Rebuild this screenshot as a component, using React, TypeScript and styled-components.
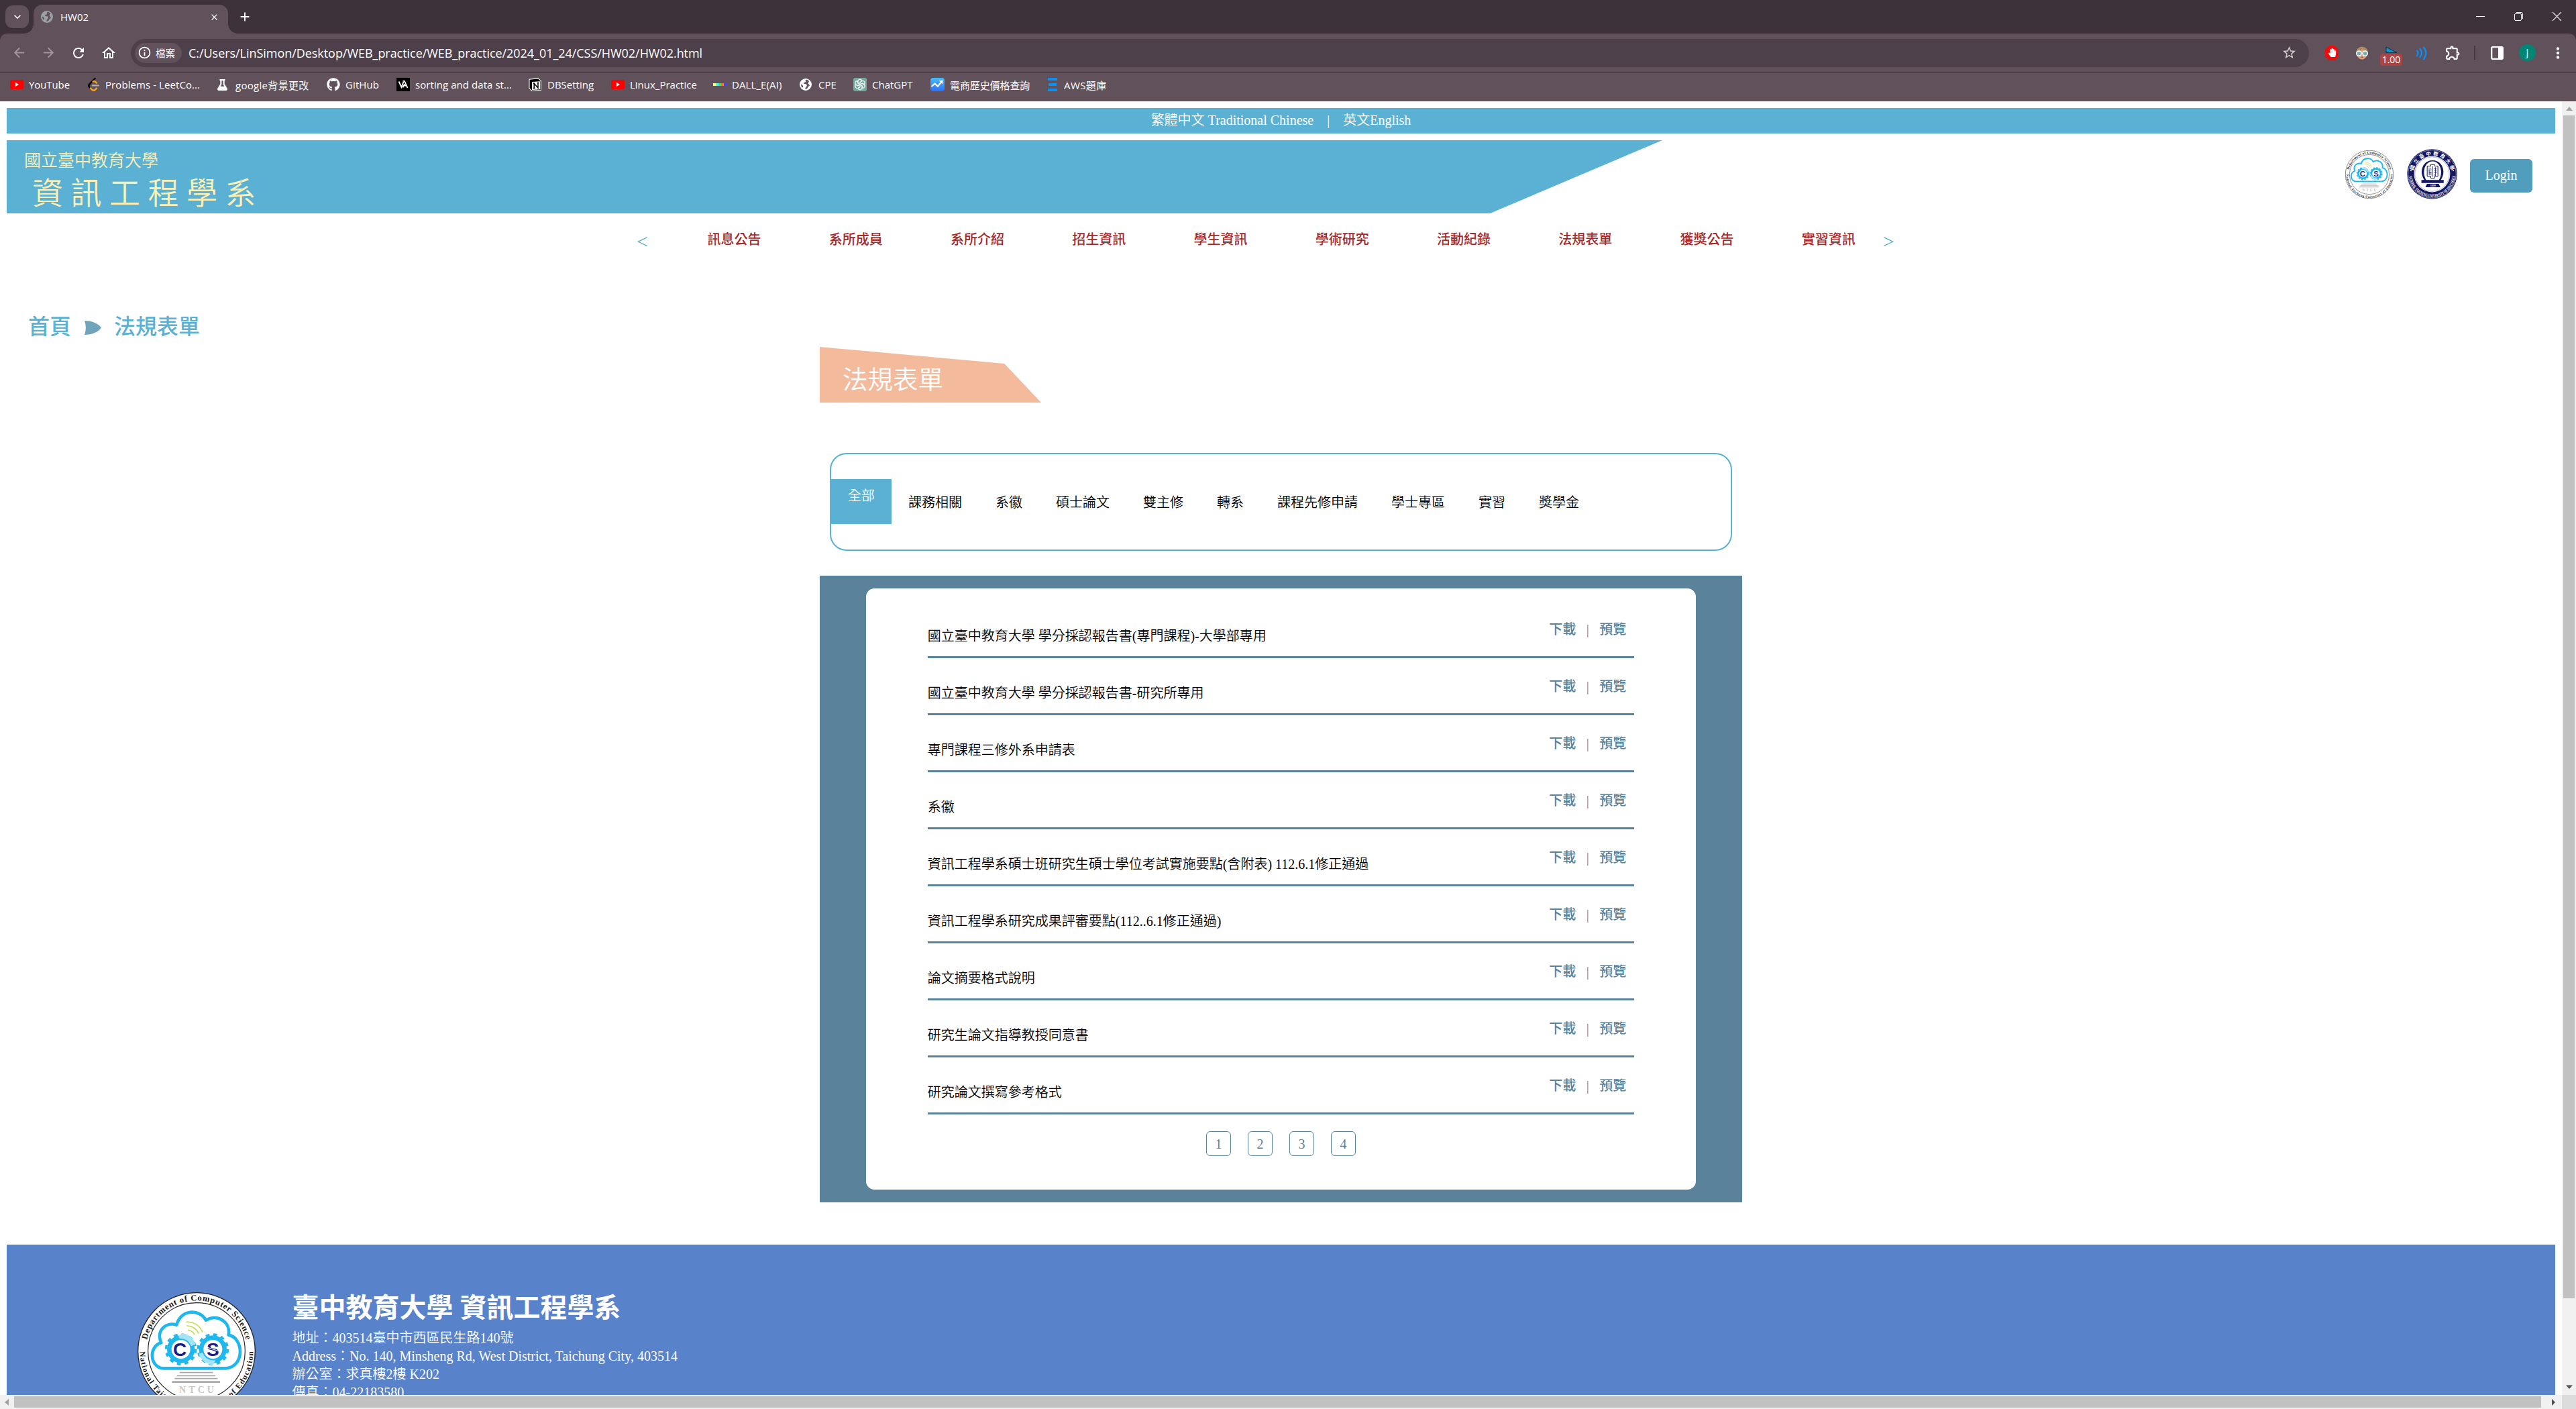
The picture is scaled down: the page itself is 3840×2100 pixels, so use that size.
import React from "react";
import styled, { createGlobalStyle } from "styled-components";
import {
  MdArrowBack,
  MdArrowForward,
  MdRefresh,
  MdOutlineHome,
  MdInfoOutline,
  MdStarBorder,
  MdOutlineExtension,
  MdMoreVert,
  MdClose,
  MdAdd,
  MdExpandMore,
} from "react-icons/md";
import { FaGithub, FaFlask, FaHandPaper } from "react-icons/fa";

const SERIF = `"Liberation Serif", "Noto Sans CJK TC", serif`;
const UI = `"Open Sans", "Noto Sans CJK TC", sans-serif`;
const SKY = "#5ab1d4";
const STEEL = "#5a829a";

const GlobalStyle = createGlobalStyle`
  *, *::before, *::after { box-sizing: border-box; }
  body { margin: 0; background: #fff; overflow: hidden; }
  svg { display: block; flex: none; }
`;

/* ---------- browser frame ---------- */

const Browser = styled.div`
  width: 3840px;
  height: 2100px;
  display: flex;
  flex-direction: column;
  overflow: hidden;
  background: #3d3239;
  font-family: ${UI};
`;

const TabStrip = styled.div`
  height: 50px;
  flex: none;
  display: flex;
  align-items: flex-start;
  padding-left: 8px;
  color: #fff;
`;

const TabSearch = styled.div`
  width: 35px;
  height: 34px;
  margin-top: 8px;
  border-radius: 11px;
  background: #60515b;
  display: flex;
  align-items: center;
  justify-content: center;
`;

const Tab = styled.div`
  position: relative;
  width: 290px;
  height: 43px;
  margin: 7px 0 0 7px;
  padding: 0 13px 7px 11px;
  display: flex;
  align-items: center;
  border-radius: 13px 13px 0 0;
  background: #60515b;
  font-size: 15px;
  &::before, &::after {
    content: "";
    position: absolute;
    bottom: 0;
    width: 14px;
    height: 14px;
  }
  &::before { left: -14px; background: radial-gradient(circle at 0 0, transparent 13.5px, #60515b 14px); }
  &::after { right: -14px; background: radial-gradient(circle at 100% 0, transparent 13.5px, #60515b 14px); }
`;

const TabTitle = styled.span`
  flex: 1;
  padding-left: 11px;
`;

const NewTab = styled.div`
  margin: 14px 0 0 14px;
`;

const WindowButtons = styled.div`
  margin-left: auto;
  display: flex;
  gap: 42px;
  padding: 17px 21px 0 0;
`;

const Toolbar = styled.div`
  height: 57px;
  flex: none;
  display: flex;
  align-items: center;
  background: #60515b;
  border-radius: 10px 10px 0 0;
  color: #fff;
`;

const NavButtons = styled.div`
  width: 195px;
  display: flex;
  gap: 21px;
  padding-left: 17px;
`;

const Omnibox = styled.div`
  width: 3247px;
  height: 42px;
  border-radius: 21px;
  background: #4d404a;
  display: flex;
  align-items: center;
  padding: 0 18px 0 6px;
`;

const Chip = styled.div`
  width: 70px;
  height: 30px;
  border-radius: 15px;
  background: #60515b;
  display: flex;
  align-items: center;
  gap: 6px;
  padding-left: 4px;
  font-size: 14.5px;
`;

const Url = styled.span`
  flex: 1;
  padding-left: 10px;
  font-size: 18px;
  letter-spacing: -0.045px;
  white-space: nowrap;
`;

const Extensions = styled.div`
  flex: 1;
  display: flex;
  align-items: center;
  padding-left: 24px;
`;

const Slot = styled.div<{ $w: number }>`
  position: relative;
  width: ${(p) => p.$w}px;
  height: 24px;
  flex: none;
  display: flex;
  align-items: center;
`;

const Badge = styled.span`
  position: absolute;
  left: -8px;
  top: 13px;
  width: 33px;
  height: 18px;
  border-radius: 4px;
  background: #a94545;
  font-size: 14px;
  line-height: 18px;
  text-align: center;
`;

const Divider = styled.i`
  width: 1.5px;
  height: 21px;
  background: #45373f;
`;

const Avatar = styled.div`
  width: 25px;
  height: 25px;
  border-radius: 50%;
  background: #008675;
  font-size: 15px;
  line-height: 22px;
  text-align: center;
`;

const Bookmarks = styled.div`
  height: 44px;
  flex: none;
  display: flex;
  padding-left: 15px;
  background: #60515b;
  border-top: 1px solid #34272f;
  color: #fff;
`;

const Bookmark = styled.div<{ $w: number; $ls: number }>`
  width: ${(p) => p.$w}px;
  height: 36px;
  flex: none;
  display: flex;
  align-items: center;
  gap: 8px;
  font-size: 15px;
  letter-spacing: ${(p) => p.$ls}px;
  white-space: nowrap;
`;

const Viewport = styled.div`
  height: 1949px;
  display: grid;
  grid-template-columns: 3819px 21px;
  grid-template-rows: 1928px 21px;
  background: #fff;
`;

const Bar = styled.div<{ $vertical?: boolean }>`
  display: flex;
  flex-direction: ${(p) => (p.$vertical ? "column" : "row")};
  align-items: center;
  justify-content: space-between;
  background: #f0f0f0;
`;

const Thumb = styled.div<{ $vertical?: boolean }>`
  width: ${(p) => (p.$vertical ? "17px" : "3767px")};
  height: ${(p) => (p.$vertical ? "1763px" : "17px")};
  background: #c1c1c1;
`;

const ArrowCell = styled.div<{ $w: number; $h: number }>`
  width: ${(p) => p.$w}px;
  height: ${(p) => p.$h}px;
  display: flex;
  align-items: center;
  justify-content: center;
`;

const Corner = styled.div`
  background: #dcdcdc;
`;

/* ---------- web page ---------- */

const Page = styled.div`
  padding: 10px 10px 0;
  overflow: hidden;
  background: #fff;
  font-family: ${SERIF};
  font-size: 20px;
  font-weight: 350;
  line-height: 30px;
  color: #000;
`;

const LanguageBar = styled.div`
  height: 38px;
  display: flex;
  justify-content: center;
  gap: 20px;
  line-height: 36px;
  background: ${SKY};
  color: #fff;
`;

const Header = styled.header`
  height: 109px;
  margin-top: 10px;
  display: flex;
  align-items: flex-start;
`;

const Banner = styled.div`
  width: 2468px;
  height: 109px;
  padding: 14px 0 0 26px;
  background: ${SKY};
  clip-path: polygon(0 0, 100% 0, 89.6% 100%, 0 100%);
  color: #fcefb4;
`;

const School = styled.div`
  font-size: 25px;
  line-height: 34px;
`;

const Department = styled.div`
  padding-left: 12px;
  font-size: 46px;
  line-height: 64px;
  letter-spacing: 11.5px;
`;

const HeaderTools = styled.div`
  margin-left: auto;
  padding-right: 34px;
  display: flex;
  align-items: flex-start;
`;

const LogoBox = styled.div<{ $top: number; $right: number }>`
  margin: ${(p) => p.$top}px ${(p) => p.$right}px 0 0;
`;

const Login = styled.button`
  width: 93px;
  height: 50px;
  margin-top: 28px;
  padding: 0 0 2px;
  border: 0;
  border-radius: 6px;
  background: #509dbd;
  color: #fff;
  font: 20px ${SERIF};
`;

const Menu = styled.nav`
  height: 78px;
  padding: 0 0 0 939px;
  display: flex;
  align-items: center;
  color: #a52a2a;
  font-weight: 500;
`;

const MenuItems = styled.div`
  display: flex;
  gap: 101.25px;
  margin: 0 41px 0 89.5px;
  white-space: nowrap;
`;

const MenuArrow = styled.span`
  width: 16px;
  padding-top: 5px;
  font-size: 30px;
  font-weight: 400;
  color: ${SKY};
`;

const Breadcrumb = styled.div`
  height: 121px;
  padding: 71px 0 0 32px;
  display: flex;
  gap: 19.5px;
  font-size: 32px;
  line-height: 40px;
  font-weight: 500;
  color: ${SKY};
  svg { margin-top: 11px; }
`;

const Main = styled.main`
  width: 1375px;
  margin: 0 auto;
`;

const Title = styled.h1`
  width: 330px;
  height: 83px;
  margin: 0;
  padding-left: 34px;
  background: #f3bb9c;
  clip-path: polygon(0 0, 83.4% 30%, 100% 100%, 0 100%);
  color: #fff;
  font-size: 37.5px;
  font-weight: 350;
  line-height: 100px;
`;

const Filters = styled.div`
  width: 1345px;
  height: 146px;
  margin: 75px 15px 0;
  padding-top: 37px;
  display: flex;
  border: 2px solid ${SKY};
  border-radius: 25px;
`;

const Filter = styled.span<{ $active?: boolean }>`
  height: 67px;
  padding: 0 25px;
  line-height: ${(p) => (p.$active ? 50 : 70)}px;
  background: ${(p) => (p.$active ? SKY : "transparent")};
  color: ${(p) => (p.$active ? "#fff" : "#000")};
`;

const Card = styled.section`
  height: 934px;
  margin-top: 37px;
  padding: 19px 68.75px;
  background: ${STEEL};
`;

const Sheet = styled.div`
  height: 896px;
  padding: 19px 92px 0;
  border-radius: 12.5px;
  background: #fff;
`;

const Row = styled.div`
  height: 85px;
  display: flex;
  justify-content: space-between;
  border-bottom: 3px solid ${STEEL};
`;

const RowName = styled.span`
  padding-top: 37px;
`;

const RowLinks = styled.span`
  display: flex;
  gap: 15.5px;
  padding: 27px 12px 0 0;
  color: ${STEEL};
  b { font-weight: 500; }
`;

const Pages = styled.div`
  margin-top: 25px;
  display: flex;
  justify-content: center;
  gap: 25px;
`;

const PageNumber = styled.span`
  width: 37px;
  height: 37px;
  border: 1.25px solid ${STEEL};
  border-radius: 6px;
  line-height: 36px;
  text-align: center;
  color: ${STEEL};
`;

const Footer = styled.footer`
  height: 300px;
  margin-top: 63px;
  padding: 71px 0 0 195px;
  display: flex;
  gap: 54.5px;
  background: #5882ca;
  color: #fff;
`;

const Address = styled.div`
  line-height: 27px;
  white-space: nowrap;
`;

const FooterTitle = styled.h2`
  margin: 0 0 7px;
  font-size: 40px;
  line-height: 48px;
  font-weight: 700;
`;

/* ---------- drawings ---------- */

const Gear = ({ x, y }: { x: number; y: number }) => (
  <g transform={`translate(${x} ${y})`} fill="none">
    <circle r="52" stroke="#1fb8ee" strokeWidth="20" />
    <circle r="66" stroke="#1fb8ee" strokeWidth="11" strokeDasharray="17.3 17.25" />
  </g>
);

const DeptLogo = ({ size, id }: { size: number; id: string }) => (
  <svg width={size} height={size} viewBox="74 77 528 528">
    <defs>
      <path id={`${id}-top`} d="M111 341 A227 227 0 0 1 565 341" />
      <path id={`${id}-low`} d="M86 322 A253 253 0 1 0 590 322" />
    </defs>
    <circle cx="338" cy="341" r="262" fill="#fff" stroke="#222" strokeWidth="4" />
    <circle cx="338" cy="341" r="217" fill="none" stroke="#222" strokeWidth="3.5" />
    <g fontFamily="Liberation Serif, serif" fontWeight="700" fill="#1a1a1a">
      <text fontSize="38" textAnchor="middle">
        <textPath href={`#${id}-top`} startOffset="50%" textLength="610">Department of Computer Science</textPath>
      </text>
      <text fontSize="35" textAnchor="middle">
        <textPath href={`#${id}-low`} startOffset="50%" textLength="800">National Taichung University of Education</textPath>
      </text>
      <text x="260" y="527" fontSize="42" textLength="156" fill="#c8c8c8">NTCU</text>
    </g>
    <path
      d="M190 417C128 414 122 318 180 303C155 250 200 208 249 223C266 152 352 150 380 202C432 172 492 210 481 268C548 280 556 408 470 417Z"
      fill="#fff" stroke="#1fb8ee" strokeWidth="14" strokeLinejoin="round"
    />
    <Gear x={268} y={332} />
    <Gear x={411} y={332} />
    <path d="M257 276 L272 261 A70 70 0 0 1 334 310 L313 318 A48 48 0 0 0 262 284Z" fill="#a5e3f8" />
    <path d="M420 386 L412 402 A70 70 0 0 1 348 352 L366 346 A48 48 0 0 0 424 380Z" fill="#a5e3f8" />
    <g fontFamily="Liberation Sans, sans-serif" fontWeight="700" fontSize="84" fill="#1c1c86" textAnchor="middle">
      <text x="263" y="362">C</text>
      <text x="411" y="362">S</text>
    </g>
    <path d="M382 322 L442 342" stroke="#fff" strokeWidth="3" />
    <g fill="none" stroke="#c6da5a" strokeWidth="5">
      <path d="M291 210 A72 72 0 0 1 365 256" />
      <path d="M294 227 A54 54 0 0 1 347 262" />
      <path d="M299 246 A36 36 0 0 1 329 267" />
    </g>
    <g stroke="#aaa" strokeWidth="5">
      <path d="M262 436H412" /><path d="M250 450H422" /><path d="M240 463H432" />
      <path d="M228 478H443" strokeWidth="8" />
    </g>
  </svg>
);

const UniversityLogo = () => (
  <svg width="75" height="75" viewBox="323 66 226 226">
    <defs>
      <path id="uni-top" d="M351 179 A85 85 0 0 1 521 179" />
      <path id="uni-low" d="M331 179 A105 105 0 0 0 541 179" />
    </defs>
    <circle cx="436" cy="179" r="112" fill="#14175f" />
    <circle cx="436" cy="179" r="108" fill="none" stroke="#fff" strokeWidth="1.5" />
    <circle cx="436" cy="179" r="81" fill="#fff" />
    <circle cx="436" cy="179" r="77.5" fill="none" stroke="#14175f" strokeWidth="1" />
    <g fill="#fff" fontWeight="700" textAnchor="middle">
      <text fontSize="22" fontFamily="Noto Sans CJK TC, sans-serif">
        <textPath href="#uni-top" startOffset="50%" textLength="234">國立臺中教育大學</textPath>
      </text>
      <text fontSize="21" fontFamily="Liberation Serif, serif">
        <textPath href="#uni-low" startOffset="50%" textLength="312" lengthAdjust="spacingAndGlyphs">NATIONAL TAICHUNG UNIVERSITY OF EDUCATION</textPath>
      </text>
    </g>
    <circle cx="341" cy="163" r="3" fill="#fff" />
    <circle cx="531" cy="163" r="3" fill="#fff" />
    <path d="M388 205H401C376 170 392 117 438 117C484 117 500 170 475 205H488V219H388Z" fill="#14175f" />
    <path d="M409 205C388 170 404 122 438 122C472 122 488 170 467 205Z" fill="#fff" />
    <path d="M413 223H466L473 238H406Z" fill="#14175f" />
    <text x="440" y="235" fontSize="12" fontWeight="700" textAnchor="middle" fill="#fff" fontFamily="Liberation Serif, serif">1899</text>
    <g fill="none" stroke="#14175f" strokeWidth="3">
      <path d="M430 136H447V143H462V189H447V197H430V189H414V143H430Z" />
      <path d="M438 143V191M420 152H432M420 160H433M421 170H432M423 160V184M431 168V184M444 153H457M445 161H457M444 170H458M451 148V187M445 180L451 187" strokeWidth="2.6" />
    </g>
  </svg>
);

const Globe = ({ size, color, land }: { size: number; color: string; land: string }) => (
  <svg width={size} height={size} viewBox="0 0 18 18">
    <circle cx="9" cy="9" r="9" fill={color} />
    <path d="M10.5 1.8C8.3 2.4 8 4 9.4 5C7.5 5.6 6 6.2 5.8 7.6C7.8 8.6 10.8 7.8 10.8 10.4C10.6 12.3 8.2 12.6 8.4 15.8C10.4 16 12 14.6 12.4 12.8C12.8 11.6 14.4 11.6 14.9 10.2C14.8 8.8 13 8.6 12.6 7.4C13.6 6.4 13 5.2 14 4C13 2.8 12 2 10.5 1.8ZM2 8.6C3.5 9.2 5.4 10.6 5.3 12.6C5 13.6 4 13.6 3.4 12.8C2.4 11.6 2 10 2 8.6Z" fill={land} />
  </svg>
);

const YouTube = () => (
  <svg width="20" height="20" viewBox="0 0 20 20">
    <rect y="3" width="20" height="14" rx="3" fill="#f00" />
    <path d="M7.8 6.8V13.2L13 10Z" fill="#fff" />
  </svg>
);

const LeetCode = () => (
  <svg width="20" height="20" viewBox="0 0 20 20" fill="none" strokeWidth="2.4" strokeLinecap="round">
    <path d="M12.5 1.2L4.2 9.6C3 11 3.2 12.6 4.2 13.8L6 15.6" stroke="#000" />
    <path d="M6 15.4L8 17.6C9.6 19 11.6 19 13 17.6L15 15.6M9.6 5.6C11 4.8 12.4 5 13.4 6.2L15 7.6" stroke="#ffa116" />
    <path d="M9 11.4H17.5" stroke="#b3b3b3" />
  </svg>
);

const VisuAlgo = () => (
  <svg width="20" height="20" viewBox="0 0 20 20">
    <rect width="20" height="20" fill="#000" />
    <path d="M3.5 5.5L7.5 14L10.5 6M9.5 4.8H12L16.5 15M9.5 14.5L12 9M10.5 11.5H15.5" fill="none" stroke="#fff" strokeWidth="1.8" />
  </svg>
);

const Notion = () => (
  <svg width="20" height="20" viewBox="0 0 20 20">
    <path d="M1 2.2L13.8 .9L18.4 4.2V18.2L4.6 19.2L1 15.4Z" fill="#000" stroke="#fff" strokeWidth="1.1" />
    <path d="M5 6L17.3 5.2V17.3L5 18Z" fill="#fff" />
    <path d="M8.2 15.4V8.4L14 15V7.6M6.8 8.3H9.4M12.6 7.6H15.4M6.8 15.5H9.6" stroke="#000" strokeWidth="1.5" fill="none" />
  </svg>
);

const Dalle = () => (
  <svg width="20" height="20" viewBox="0 0 20 20">
    {["#ffff66", "#42ffff", "#51da4c", "#ff6e3c", "#3c46ff"].map((c, i) => (
      <rect key={c} x={i * 4} y="8" width="4" height="4" fill={c} />
    ))}
  </svg>
);

const ChatGpt = () => (
  <svg width="20" height="20" viewBox="0 0 20 20">
    <rect width="20" height="20" rx="3" fill="#75a99b" />
    <g fill="none" stroke="#fff" strokeWidth="1.1" transform="translate(10 10)">
      {[0, 60, 120, 180, 240, 300].map((a) => (
        <path key={a} transform={`rotate(${a})`} d="M-3 -1.8V-4.6A3 3 0 0 1 2.8 -5.8L0 -3.6V-.5" />
      ))}
    </g>
  </svg>
);

const PriceChart = () => (
  <svg width="21" height="20" viewBox="0 0 21 20">
    <defs>
      <linearGradient id="price" x1="0" y1="0" x2="0" y2="1">
        <stop offset="0" stopColor="#45bdf8" />
        <stop offset="1" stopColor="#2f71fb" />
      </linearGradient>
    </defs>
    <rect width="21" height="20" rx="4" fill="url(#price)" />
    <path d="M1.5 13L6.5 8.6L11 12.6L17 5.4" fill="none" stroke="#fff" strokeWidth="2.2" />
    <path d="M12.8 4.6L18.6 3.4L18 9.2Z" fill="#fff" />
  </svg>
);

const Stack = () => (
  <svg width="20" height="20" viewBox="0 0 20 20" fill="#0d8ff2">
    <path d="M4 0H18V4H4ZM5 8H17V12H5ZM4 16H18V20H4Z" />
  </svg>
);

const Face = () => (
  <svg width="20" height="20" viewBox="0 0 20 20">
    <circle cx="10" cy="9.6" r="9" fill="#a98a5f" />
    <path d="M2.4 9C6 8 9 6 11 3.8C13 6 15 7 17.6 8.4C18 13.6 15 19.6 10 19.6C5 19.6 2.2 14 2.4 9Z" fill="#dba283" />
    <circle cx="5.4" cy="10.6" r="3.6" fill="#74adba" stroke="#fff" strokeWidth="1.5" />
    <circle cx="14.6" cy="10.6" r="3.6" fill="#74adba" stroke="#fff" strokeWidth="1.5" />
    <path d="M8 16.2H12" stroke="#a5523f" strokeWidth="1.2" />
  </svg>
);

const Triangle = ({ d, fill, w, h }: { d: string; fill: string; w: number; h: number }) => (
  <svg width={w} height={h} viewBox={`0 0 ${w} ${h}`}>
    <path d={d} fill={fill} />
  </svg>
);

/* ---------- data ---------- */

const bookmarks: { label: string; width: number; spacing: number; icon: React.ReactNode }[] = [
  { label: "YouTube", width: 114, spacing: -0.1, icon: <YouTube /> },
  { label: "Problems - LeetCo...", width: 194, spacing: 0.08, icon: <LeetCode /> },
  { label: "google背景更改", width: 164, spacing: 0.3, icon: <Slot $w={20}><FaFlask size={17} /></Slot> },
  { label: "GitHub", width: 104, spacing: 0.1, icon: <FaGithub size={20} /> },
  { label: "sorting and data st...", width: 197, spacing: 0.06, icon: <VisuAlgo /> },
  { label: "DBSetting", width: 123, spacing: 0, icon: <Notion /> },
  { label: "Linux_Practice", width: 152, spacing: 0, icon: <YouTube /> },
  { label: "DALL_E(AI)", width: 129, spacing: 0.1, icon: <Dalle /> },
  { label: "CPE", width: 80, spacing: 0, icon: <Slot $w={20}><Globe size={18} color="#fff" land="#60515b" /></Slot> },
  { label: "ChatGPT", width: 115, spacing: 0, icon: <ChatGpt /> },
  { label: "電商歷史價格查詢", width: 171, spacing: -0.1, icon: <PriceChart /> },
  { label: "AWS題庫", width: 100, spacing: 0.4, icon: <Stack /> },
];

const menu = ["訊息公告", "系所成員", "系所介紹", "招生資訊", "學生資訊", "學術研究", "活動紀錄", "法規表單", "獲獎公告", "實習資訊"];

const filters = ["全部", "課務相關", "系徽", "碩士論文", "雙主修", "轉系", "課程先修申請", "學士專區", "實習", "獎學金"];

const files = [
  "國立臺中教育大學 學分採認報告書(專門課程)-大學部專用",
  "國立臺中教育大學 學分採認報告書-研究所專用",
  "專門課程三修外系申請表",
  "系徽",
  "資訊工程學系碩士班研究生碩士學位考試實施要點(含附表) 112.6.1修正通過",
  "資訊工程學系研究成果評審要點(112..6.1修正通過)",
  "論文摘要格式說明",
  "研究生論文指導教授同意書",
  "研究論文撰寫參考格式",
];

export default function App() {
  return (
    <>
      <GlobalStyle />
      <Browser>
        <TabStrip>
          <TabSearch><MdExpandMore size={20} /></TabSearch>
          <Tab>
            <Globe size={18} color="#9aa0a6" land="#60515b" />
            <TabTitle>HW02</TabTitle>
            <MdClose size={15} />
          </Tab>
          <NewTab><MdAdd size={22} /></NewTab>
          <WindowButtons>
            <svg width="15" height="15" viewBox="0 0 15 15"><path d="M1 7.5H14" stroke="#fff" /></svg>
            <svg width="15" height="15" viewBox="0 0 15 15" fill="none" stroke="#fff">
              <rect x="1.5" y="3.5" width="10" height="10" rx="1.5" />
              <path d="M4 1.5H11.5A2 2 0 0 1 13.5 3.5V11" />
            </svg>
            <svg width="15" height="15" viewBox="0 0 15 15"><path d="M1 1L14 14M14 1L1 14" stroke="#fff" strokeWidth="1.1" /></svg>
          </WindowButtons>
        </TabStrip>

        <Toolbar>
          <NavButtons>
            <MdArrowBack size={23} color="#a1979d" />
            <MdArrowForward size={23} color="#a1979d" />
            <MdRefresh size={24} />
            <MdOutlineHome size={24} />
          </NavButtons>
          <Omnibox>
            <Chip><MdInfoOutline size={21} />檔案</Chip>
            <Url>C:/Users/LinSimon/Desktop/WEB_practice/WEB_practice/2024_01_24/CSS/HW02/HW02.html</Url>
            <MdStarBorder size={23} color="#d0cacd" />
          </Omnibox>
          <Extensions>
            <Slot $w={45}>
              <svg width="20" height="22" viewBox="0 0 20 22">
                <path d="M6 0H14L20 6V16L14 22H6L0 16V6Z" fill="#ee0d0d" />
                <FaHandPaper x={4} y={4} size={13} color="#fff" />
              </svg>
            </Slot>
            <Slot $w={45}><Face /></Slot>
            <Slot $w={45}>
              <svg width="18" height="22" viewBox="0 0 18 22"><path d="M1 2L17 10.5H1Z" fill="#1191c9" stroke="#0b3246" /></svg>
              <Badge>1.00</Badge>
            </Slot>
            <Slot $w={43}>
              <svg width="18" height="22" viewBox="0 0 18 22" fill="none" stroke="#128af0" strokeWidth="2.4" strokeLinecap="round">
                <path d="M2 7.5Q5 11 2 15M6.5 5Q11.5 11 6.5 17M11.8 2.4Q19 11 11.8 20" />
              </svg>
            </Slot>
            <Slot $w={44}><MdOutlineExtension size={25} /></Slot>
            <Slot $w={25}><Divider /></Slot>
            <Slot $w={42}>
              <svg width="19" height="20" viewBox="0 0 19 20">
                <rect x="1.2" y="1.2" width="16.6" height="17.6" rx="1.5" fill="none" stroke="#fff" strokeWidth="2.3" />
                <path d="M11 1H18V19H11Z" fill="#fff" />
              </svg>
            </Slot>
            <Slot $w={45}><Avatar>j</Avatar></Slot>
            <MdMoreVert size={26} />
          </Extensions>
        </Toolbar>

        <Bookmarks>
          {bookmarks.map((b) => (
            <Bookmark key={b.label} $w={b.width} $ls={b.spacing}>{b.icon}<span>{b.label}</span></Bookmark>
          ))}
        </Bookmarks>

        <Viewport>
          <Page>
            <LanguageBar>
              <span>繁體中文 Traditional Chinese</span>
              <span>|</span>
              <span>英文English</span>
            </LanguageBar>

            <Header>
              <Banner>
                <School>國立臺中教育大學</School>
                <Department>資訊工程學系</Department>
              </Banner>
              <HeaderTools>
                <LogoBox $top={15} $right={20}><DeptLogo size={72} id="head" /></LogoBox>
                <LogoBox $top={13} $right={19}><UniversityLogo /></LogoBox>
                <Login>Login</Login>
              </HeaderTools>
            </Header>

            <Menu>
              <MenuArrow>&lt;</MenuArrow>
              <MenuItems>{menu.map((m) => <span key={m}>{m}</span>)}</MenuItems>
              <MenuArrow>&gt;</MenuArrow>
            </Menu>

            <Breadcrumb>
              <span>首頁</span>
              <svg width="25" height="21" viewBox="0 0 25 21">
                <path d="M0 0C9 0 20 3 25 10.5C20 18 9 21 0 21C2.5 14 2.5 7 0 0Z" fill="#6fa4bb" />
              </svg>
              <span>法規表單</span>
            </Breadcrumb>

            <Main>
              <Title>法規表單</Title>
              <Filters>
                {filters.map((f, i) => <Filter key={f} $active={i === 0}>{f}</Filter>)}
              </Filters>
              <Card>
                <Sheet>
                  {files.map((name) => (
                    <Row key={name}>
                      <RowName>{name}</RowName>
                      <RowLinks><b>下載</b><span>|</span><b>預覽</b></RowLinks>
                    </Row>
                  ))}
                  <Pages>
                    {[1, 2, 3, 4].map((n) => <PageNumber key={n}>{n}</PageNumber>)}
                  </Pages>
                </Sheet>
              </Card>
            </Main>

            <Footer>
              <DeptLogo size={176} id="foot" />
              <Address>
                <FooterTitle>臺中教育大學 資訊工程學系</FooterTitle>
                <div>地址：403514臺中市西區民生路140號</div>
                <div>Address：No. 140, Minsheng Rd, West District, Taichung City, 403514</div>
                <div>辦公室：求真樓2樓 K202</div>
                <div>傳真：04-22183580</div>
              </Address>
            </Footer>
          </Page>

          <Bar $vertical>
            <ArrowCell $w={21} $h={21}><Triangle w={10} h={6} d="M5 0L10 6H0Z" fill="#a3a3a3" /></ArrowCell>
            <Thumb $vertical />
            <ArrowCell $w={21} $h={144}>
              <Triangle w={10} h={144} d="M0 129.5H10L5 135Z" fill="#505050" />
            </ArrowCell>
          </Bar>
          <Bar>
            <ArrowCell $w={20} $h={21}><Triangle w={6} h={10} d="M6 0V10L0 5Z" fill="#a3a3a3" /></ArrowCell>
            <Thumb />
            <ArrowCell $w={31} $h={21}><Triangle w={15} h={10} d="M8 0V10L13 5Z" fill="#505050" /></ArrowCell>
          </Bar>
          <Corner />
        </Viewport>
      </Browser>
    </>
  );
}
